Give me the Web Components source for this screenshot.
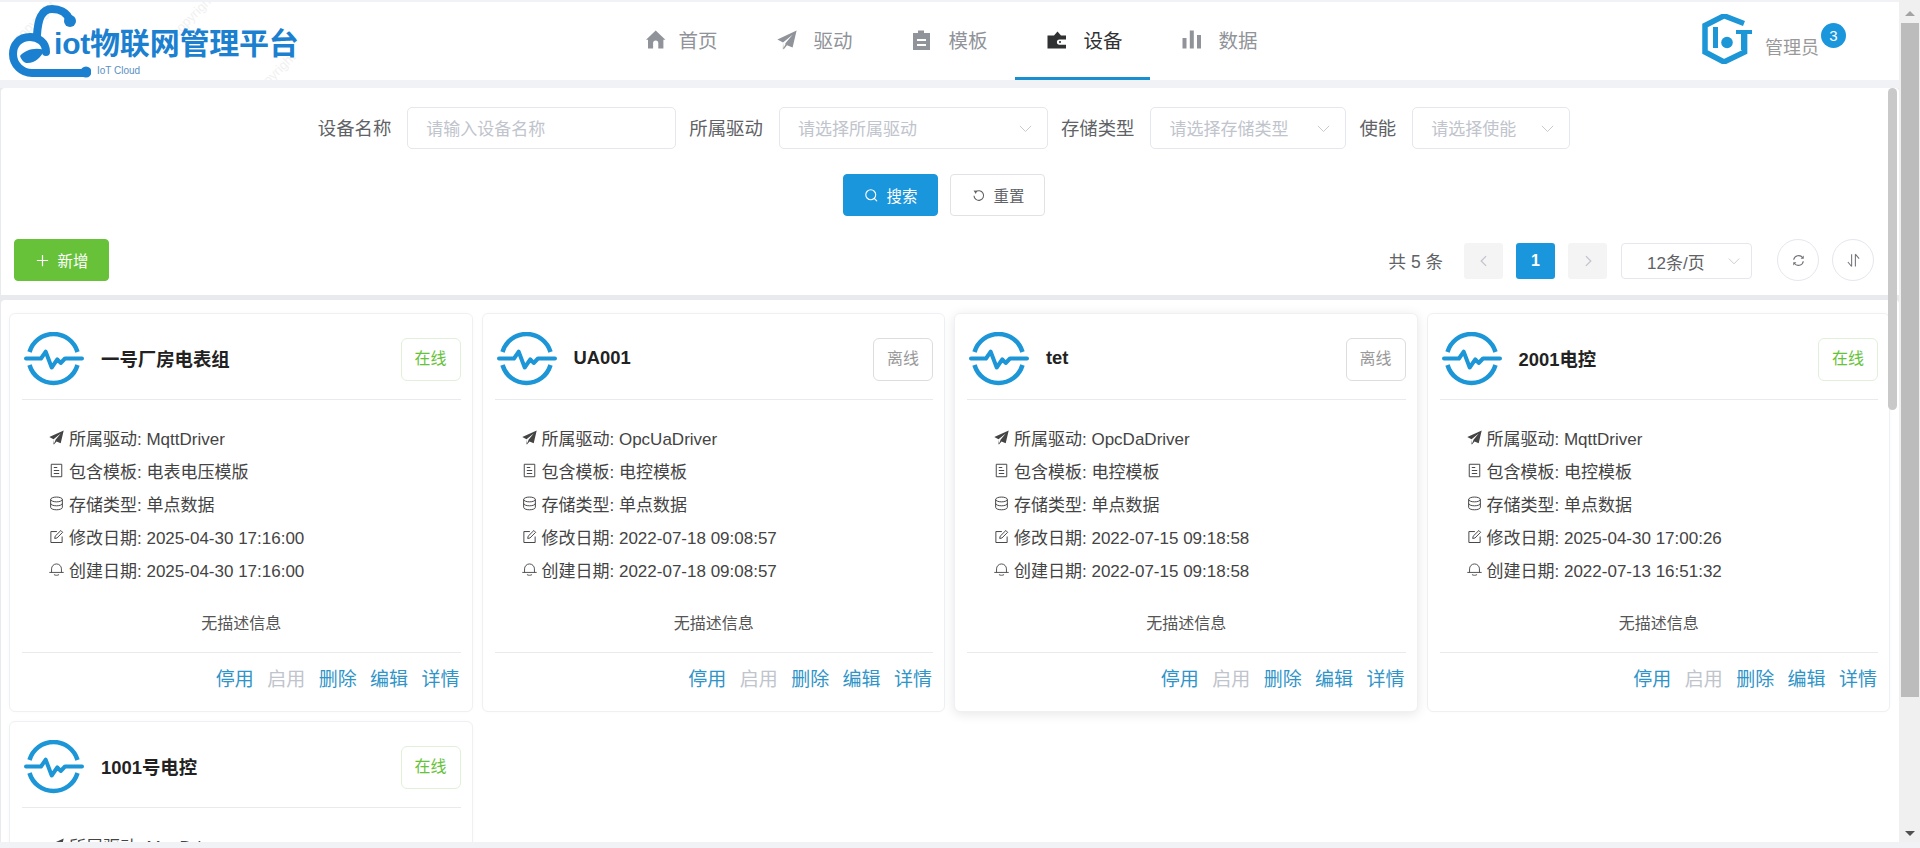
<!DOCTYPE html>
<html lang="zh">
<head>
<meta charset="utf-8">
<title>iot物联网管理平台</title>
<style>
    html, body { margin: 0; height: 100%; overflow: hidden; background: #f0f2f5; }
    body { font-family: "Liberation Sans", "Noto Sans CJK SC", sans-serif; }
</style>
</head>
<body>
<iot-app>
    <iot-header>
        <iot-logo slot="logo"></iot-logo>
        <iot-nav-item slot="nav" icon="home">首页</iot-nav-item>
        <iot-nav-item slot="nav" icon="send">驱动</iot-nav-item>
        <iot-nav-item slot="nav" icon="clipboard">模板</iot-nav-item>
        <iot-nav-item slot="nav" icon="wallet" active>设备</iot-nav-item>
        <iot-nav-item slot="nav" icon="bars">数据</iot-nav-item>
        <iot-user slot="user" count="3">管理员</iot-user>
    </iot-header>

    <iot-search slot="search">
        <iot-field slot="fields" label="设备名称" placeholder="请输入设备名称" width="269"></iot-field>
        <iot-field slot="fields" label="所属驱动" placeholder="请选择所属驱动" width="269" select></iot-field>
        <iot-field slot="fields" label="存储类型" placeholder="请选择存储类型" width="196" select></iot-field>
        <iot-field slot="fields" label="使能" placeholder="请选择使能" width="158" select></iot-field>
        <iot-button slot="buttons" kind="primary" icon="search">搜索</iot-button>
        <iot-button slot="buttons" icon="undo">重置</iot-button>
        <iot-button slot="add" kind="success" icon="plus">新增</iot-button>
        <iot-pager slot="pager"></iot-pager>
    </iot-search>

    <iot-card-list slot="cards">
        <iot-card name="一号厂房电表组" status="在线">
            <iot-row icon="send">所属驱动: MqttDriver</iot-row>
            <iot-row icon="doc">包含模板: 电表电压模版</iot-row>
            <iot-row icon="db">存储类型: 单点数据</iot-row>
            <iot-row icon="edit">修改日期: 2025-04-30 17:16:00</iot-row>
            <iot-row icon="bell">创建日期: 2025-04-30 17:16:00</iot-row>
        </iot-card>
        <iot-card name="UA001" status="离线">
            <iot-row icon="send">所属驱动: OpcUaDriver</iot-row>
            <iot-row icon="doc">包含模板: 电控模板</iot-row>
            <iot-row icon="db">存储类型: 单点数据</iot-row>
            <iot-row icon="edit">修改日期: 2022-07-18 09:08:57</iot-row>
            <iot-row icon="bell">创建日期: 2022-07-18 09:08:57</iot-row>
        </iot-card>
        <iot-card name="tet" status="离线" hovered>
            <iot-row icon="send">所属驱动: OpcDaDriver</iot-row>
            <iot-row icon="doc">包含模板: 电控模板</iot-row>
            <iot-row icon="db">存储类型: 单点数据</iot-row>
            <iot-row icon="edit">修改日期: 2022-07-15 09:18:58</iot-row>
            <iot-row icon="bell">创建日期: 2022-07-15 09:18:58</iot-row>
        </iot-card>
        <iot-card name="2001电控" status="在线">
            <iot-row icon="send">所属驱动: MqttDriver</iot-row>
            <iot-row icon="doc">包含模板: 电控模板</iot-row>
            <iot-row icon="db">存储类型: 单点数据</iot-row>
            <iot-row icon="edit">修改日期: 2025-04-30 17:00:26</iot-row>
            <iot-row icon="bell">创建日期: 2022-07-13 16:51:32</iot-row>
        </iot-card>
        <iot-card name="1001号电控" status="在线">
            <iot-row icon="send">所属驱动: MqttDriver</iot-row>
        </iot-card>
    </iot-card-list>
</iot-app>

<script>
// every icon is drawn in a 20x20 box
const ICONS = {
    home: `<path fill="currentColor" transform="translate(4 0)" d="M9.7 0.5 19.4 9.7 17.4 9.7V18.5H12.3V13.2a2.6 2.6 0 0 0-5.2 0V18.5H2V9.7H0Z"/>`,
    send: `<path fill="currentColor" d="M19.6 0.6 0.4 9.4 6 12.4 15.6 4.8 8.2 13.6 8.6 14 5.8 19.6 6 12.8 6.6 19.4 10 15.2 15.6 17.6Z"/>`,
    clipboard: `<path fill="currentColor" fill-rule="evenodd" d="M1 3H6V0.5H12V3H18V20H1ZM5 9V11H14V9ZM5 14V16H14V14Z"/>`,
    wallet: `<path fill="currentColor" fill-rule="evenodd" d="M0.5 5.5H7L10.5 1.5 14 5.5H19V9.5H12.5a2.6 2.6 0 0 0 0 5.2H19V18.5H0.5ZM13 11a1 1 0 1 0 .01 0Z"/>`,
    bars: `<path fill="currentColor" d="M0.5 8H4.5V18.5H0.5ZM7.8 0.5H11.8V18.5H7.8ZM15 5H19V18.5H15Z"/>`,
    search: `<g fill="none" stroke="currentColor" stroke-width="1.5" stroke-linecap="round"><circle cx="9" cy="9" r="6.6"/><path d="M13.8 14 17 17.2"/></g>`,
    undo: `<path fill="none" stroke="currentColor" stroke-width="1.5" d="M6 5.4A6.4 6.4 0 1 1 4 10.2"/><path fill="currentColor" d="M3.4 3.4 8 3.6 6.4 8Z"/>`,
    plus: `<path fill="none" stroke="currentColor" stroke-width="1.6" d="M10 2.5V17.5M2.5 10H17.5"/>`,
    chevron: `<path fill="none" stroke="currentColor" stroke-width="1.2" d="M2.5 6.5 10 14 17.5 6.5"/>`,
    left: `<path fill="none" stroke="currentColor" stroke-width="1.8" d="M13 3 6 10 13 17"/>`,
    right: `<path fill="none" stroke="currentColor" stroke-width="1.8" d="M7 3 14 10 7 17"/>`,
    refresh: `<g fill="none" stroke="currentColor" stroke-width="1.5"><path d="M15.6 6.4A6.6 6.6 0 0 0 3.6 9"/><path d="M4.4 13.6A6.6 6.6 0 0 0 16.4 11"/></g><path fill="currentColor" d="M17 3.4V7.8H12.8ZM3 16.6V12.2H7.2Z"/>`,
    sort: `<g fill="none" stroke="currentColor" stroke-width="1.4"><path d="M7.5 1.5V18M7.5 18 2.5 12"/><path d="M12.5 18V1.5M12.5 1.5 17.5 7.5"/></g>`,
    doc: `<g fill="none" stroke="currentColor" stroke-width="1.3"><path d="M3 1.7H17V18.3H3Z"/><path d="M6.4 6H11M6.4 10H13.6M6.4 14H13.6"/></g>`,
    db: `<g fill="none" stroke="currentColor" stroke-width="1.3"><ellipse cx="10" cy="4.6" rx="7.8" ry="3.2"/><path d="M2.2 4.6V15.2C2.2 17 5.7 18.4 10 18.4S17.8 17 17.8 15.2V4.6"/><path d="M2.2 9.9C2.2 11.7 5.7 13.1 10 13.1S17.8 11.7 17.8 9.9"/></g>`,
    edit: `<g fill="none" stroke="currentColor" stroke-width="1.3"><path d="M17.5 10V18H2.5V3.4H10.5"/><path d="M7.6 12.6 8.2 9.6 15.8 2 18.2 4.4 10.6 12Z"/></g>`,
    bell: `<g fill="none" stroke="currentColor" stroke-width="1.2"><path d="M3.4 13.8V9.2A6.6 6.6 0 0 1 16.6 9.2V13.8"/><path d="M0.4 13.9H19.6"/><path d="M6.6 16.8C8.4 18 11.6 18 13.4 16.8"/></g>`
};

function defineEl(name, css, html, setup) {
    customElements.define(name, class extends HTMLElement {
        constructor() {
            super();
            this.attachShadow({mode: 'open'});
        }
        connectedCallback() {
            if (this.shadowRoot.childElementCount) return;
            this.shadowRoot.innerHTML = `<style>${css}</style>` + html(this);
            if (setup) setup(this);
        }
    });
}

defineEl('iot-icon', `
    :host { display: inline-flex; width: var(--size, 16px); height: var(--size, 16px); flex: none; }
    svg { width: 100%; height: 100%; overflow: visible; display: block; }
`, el => `<svg viewBox="0 0 20 20" aria-hidden="true">${ICONS[el.getAttribute('name')]}</svg>`);

defineEl('iot-app', `
    :host { display: flex; flex-direction: column; width: 1920px; height: 848px; overflow: hidden; background: #f0f2f5; }
    .top { display: flex; height: 842px; }
    .page { width: 1899px; display: flex; flex-direction: column; padding-top: 2px; box-sizing: border-box; }
    .main { position: relative; margin-top: 8px; padding-left: 1px; flex: 1; min-height: 0; display: flex; flex-direction: column; background: #e9eaed; }
    .thumb { position: absolute; left: 1888px; top: 0; width: 9px; height: 322px; border-radius: 5px; background: #c9c9c9; }
    .bar { width: 21px; background: #f0f0f0; display: flex; flex-direction: column; align-items: center; }
    .arrow { height: 23px; width: 100%; display: flex; align-items: center; justify-content: center; flex: none; }
    .arrow i { width: 0; height: 0; border-left: 5px solid transparent; border-right: 5px solid transparent; }
    .up i { border-bottom: 5px solid #a3a3a3; margin-top: 4px; }
    .down { margin-top: auto; height: 17px; }
    .down i { border-top: 5px solid #505050; }
    .drag { width: 18px; height: 674px; background: #bcbcbc; flex: none; }
`, () => `
    <div class="top">
        <div class="page">
            <slot></slot>
            <div class="main">
                <slot name="search"></slot>
                <slot name="cards"></slot>
                <div class="thumb"></div>
            </div>
        </div>
        <div class="bar">
            <div class="arrow up"><i></i></div>
            <div class="drag"></div>
            <div class="arrow down"><i></i></div>
        </div>
    </div>
`);

defineEl('iot-header', `
    :host { display: grid; grid-template-columns: 1fr auto 1fr; height: 78px; padding-right: 5px; background: #fff; flex: none; }
    nav { display: flex; }
    .user { display: flex; justify-content: flex-end; }
`, () => `
    <div><slot name="logo"></slot></div>
    <nav><slot name="nav"></slot></nav>
    <div class="user"><slot name="user"></slot></div>
`);

defineEl('iot-logo', `
    :host { display: block; position: relative; width: 320px; height: 78px; overflow: hidden; }
    svg { position: absolute; left: 9px; top: 2px; }
    .title { position: absolute; left: 54px; top: 24px; font: 700 30px/36px "Liberation Sans", "Noto Sans CJK SC", sans-serif; color: #1b80cf; letter-spacing: -0.2px; white-space: nowrap; }
    .sub { position: absolute; left: 97px; top: 63px; font-size: 10px; line-height: 12px; color: #5a8fc4; white-space: nowrap; }
    .mark { position: absolute; font-size: 13px; color: #f1f1f1; transform: rotate(-45deg); white-space: nowrap; }
`, () => `
    <span class="mark" style="left:166px;top:6px">copyright</span>
    <span class="mark" style="left:8px;top:12px">copyright</span>
    <span class="mark" style="left:248px;top:64px">copyright</span>
    <svg width="82" height="74" viewBox="0 0 82 74">
        <g fill="none" stroke="#1b80cf" stroke-linecap="round">
            <path stroke-width="8" d="M61 17C58 7 49 5 43 5 32 5 29 16 28 31"/>
            <path stroke-width="8" d="M37 48C37 38 29 33 21 33 10 33 4 41 4 50 4 61 13 69 23 69H77"/>
        </g>
        <circle cx="61" cy="17" r="6" fill="#1b80cf"/>
        <circle cx="77" cy="68" r="5.5" fill="#1b80cf"/>
        <path fill="#1b80cf" d="M11 52C16 46 26 43 35 46 33 53 25 60 17 59 14 58 12 55 11 52Z"/>
    </svg>
    <span class="title">iot物联网管理平台</span>
    <span class="sub">IoT Cloud</span>
`);

defineEl('iot-nav-item', `
    :host { display: flex; align-items: center; gap: 17px; width: 135px; height: 78px; box-sizing: border-box; padding-left: 32px; color: #909399; font-size: 19.500px; border-bottom: 3px solid transparent; --size: 20px; }
    :host([active]) { color: #303133; border-bottom-color: #1a8fd0; }
`, el => `<iot-icon name="${el.getAttribute('icon')}"></iot-icon><slot></slot>`);

defineEl('iot-user', `
    :host { display: flex; position: relative; width: 192px; height: 78px; box-sizing: border-box; font-size: 18px; color: #999; align-items: center; }
    svg { flex: none; margin-top: -4px; }
    .name { margin-left: 13px; margin-top: 9px; }
    .badge { position: absolute; left: 119px; top: 21px; width: 25px; height: 25px; border-radius: 50%; background: #1a96dc; color: #fff; font-size: 15px; line-height: 25px; text-align: center; }
`, el => `
    <svg width="50" height="50" viewBox="0 0 50 50">
        <g fill="none" stroke="#1c96d6" stroke-width="5.500">
            <path d="M42 9.5 22 1.8 3 11.5V38L22 48 42.6 38V17"/>
        </g>
        <path fill="#1c96d6" d="M11 13H16V34H11ZM34 16H50V20H45V36H39V20H34Z"/>
        <circle cx="25" cy="28.500" r="5.800" fill="#1c96d6"/>
    </svg>
    <span class="name"><slot></slot></span>
    <span class="badge">${el.getAttribute('count')}</span>
`);

defineEl('iot-search', `
    :host { display: block; background: #fff; height: 207px; box-sizing: border-box; padding: 19px 25px 14px 13px; border-radius: 4px 4px 0 0; flex: none; }
    .row { display: flex; justify-content: center; }
    .fields { gap: 13px; }
    .buttons { gap: 12px; margin-top: 25px; }
    .tools { justify-content: space-between; margin-top: 23px; align-items: center; }
`, () => `
    <div class="row fields"><slot name="fields"></slot></div>
    <div class="row buttons"><slot name="buttons"></slot></div>
    <div class="row tools"><slot name="add"></slot><slot name="pager"></slot></div>
`);

defineEl('iot-field', `
    :host { display: flex; align-items: center; gap: 16px; font-size: 18.400px; color: #606266; }
    .label { padding-bottom: 2px; }
    .box { display: flex; align-items: center; justify-content: space-between; height: 42px; box-sizing: border-box; padding: 0 14px 0 18px; border: 1px solid #e4e7ed; border-radius: 5px; color: #c0c4cc; font-size: 17px; }
    .box span { padding-bottom: 2px; }
    iot-icon { --size: 15px; }
`, el => `
    <span class="label">${el.getAttribute('label')}</span>
    <div class="box" style="width:${el.getAttribute('width')}px">
        <span>${el.getAttribute('placeholder')}</span>
        ${el.hasAttribute('select') ? '<iot-icon name="chevron"></iot-icon>' : ''}
    </div>
`);

defineEl('iot-button', `
    :host { display: flex; align-items: center; justify-content: center; gap: 8px; width: 95px; height: 42px; box-sizing: border-box; border: 1px solid #e0e2e6; border-radius: 4px; background: #fff; color: #606266; font-size: 15.400px; --size: 15px; }
    :host([kind=primary]) { background: #1a96dc; border-color: #1a96dc; color: #fff; }
    :host([kind=success]) { background: #67c23a; border-color: #67c23a; color: #fff; }
`, el => `<iot-icon name="${el.getAttribute('icon')}"></iot-icon><slot></slot>`);

defineEl('iot-pager', `
    :host { display: flex; align-items: center; font-size: 17px; color: #606266; }
    .total { margin-right: 21px; font-size: 17.500px; }
    .page { width: 39px; height: 36px; margin: 2px 13px 0 0; border-radius: 3px; background: #f4f4f5; color: #c0c4cc; display: flex; align-items: center; justify-content: center; font-weight: 700; --size: 14px; }
    .page.on { background: #1a96dc; color: #fff; font-size: 16px; }
    .size { width: 131px; height: 36px; margin: 2px 25px 0 1px; box-sizing: border-box; padding: 0 10px 0 25px; border: 1px solid #e4e7ed; border-radius: 4px; display: flex; align-items: center; justify-content: space-between; --size: 14px; }
    .size iot-icon { color: #c0c4cc; }
    .round { width: 42px; height: 42px; box-sizing: border-box; border: 1px solid #e4e7ed; border-radius: 50%; display: flex; align-items: center; justify-content: center; color: #707277; --size: 15px; }
    .round + .round { margin-left: 13px; }
`, () => `
    <span class="total">共 5 条</span>
    <span class="page"><iot-icon name="left"></iot-icon></span>
    <span class="page on">1</span>
    <span class="page"><iot-icon name="right"></iot-icon></span>
    <span class="size"><span>12条/页</span><iot-icon name="chevron"></iot-icon></span>
    <span class="round"><iot-icon name="refresh"></iot-icon></span>
    <span class="round"><iot-icon name="sort"></iot-icon></span>
`);

defineEl('iot-card-list', `
    :host { display: grid; grid-template-columns: repeat(4, 463.500px); grid-auto-rows: 399px; gap: 9px; margin-top: 5px; padding: 13px 0 0 8px; background: #fff; flex: 1; min-height: 0; overflow: hidden; border-radius: 4px 4px 0 0; }
`, () => `<slot></slot>`);

defineEl('iot-card', `
    :host { display: flex; flex-direction: column; box-sizing: border-box; height: 399px; padding: 0 11px 8px 12px; border: 1px solid #eef0f4; border-radius: 6px; background: #fff; color: #444; box-shadow: 0 0 4px rgba(0,0,0,.02); }
    :host([hovered]) { box-shadow: 0 2px 12px rgba(0,0,0,.1); }
    header { display: flex; align-items: center; height: 86px; box-sizing: border-box; padding: 5px 0 0 2px; border-bottom: 1px solid #e8eaee; flex: none; }
    header svg { flex: none; }
    h3 { margin: 0 0 2px 17px; flex: 1; font-size: 18.400px; font-weight: 700; color: #222; }
    .status { width: 60px; height: 43px; box-sizing: border-box; border: 1px solid #ddd; border-radius: 6px; color: #999; font-size: 16px; line-height: 40px; text-align: center; }
    .status.on { border-color: #e1f0d8; color: #67c23a; }
    .rows { padding: 21px 0 0 27px; height: 187px; box-sizing: border-box; flex: none; }
    .desc { height: 65px; box-sizing: border-box; padding-top: 5px; display: flex; align-items: center; justify-content: center; font-size: 16px; color: #555; flex: none; }
    .actions { display: flex; justify-content: flex-end; align-items: center; gap: 13.400px; height: 51px; box-sizing: border-box; padding: 0 1px 2px 0; border-top: 1px solid #e8eaee; font-size: 19px; color: #2f94c8; flex: none; }
    .off { color: #c0c4cc; }
`, el => {
    const status = el.getAttribute('status');
    return `
    <header>
        <svg width="60" height="54" viewBox="0 0 60 54">
            <g fill="none" stroke="#1c96d6" stroke-width="4.500">
                <path d="M5.500 20A25 25 0 0 1 53.500 20"/>
                <path d="M5.500 33A25 25 0 0 0 53.500 33"/>
                <path stroke-width="4" stroke-linecap="round" stroke-linejoin="round" d="M2 26.500H17L21.700 19.700 27.700 35.500 33.300 27.300 36.700 31 41 26.500H58"/>
            </g>
        </svg>
        <h3>${el.getAttribute('name')}</h3>
        <span class="status ${status === '在线' ? 'on' : ''}">${status}</span>
    </header>
    <div class="rows"><slot></slot></div>
    <div class="desc">无描述信息</div>
    <div class="actions">
        <span>停用</span><span class="off">启用</span><span>删除</span><span>编辑</span><span>详情</span>
    </div>`;
});

defineEl('iot-row', `
    :host { display: flex; align-items: center; gap: 5px; height: 33px; font-size: 17px; color: #444; --size: 15px; }
`, el => `<iot-icon name="${el.getAttribute('icon')}"></iot-icon><span><slot></slot></span>`);
</script>
</body>
</html>
